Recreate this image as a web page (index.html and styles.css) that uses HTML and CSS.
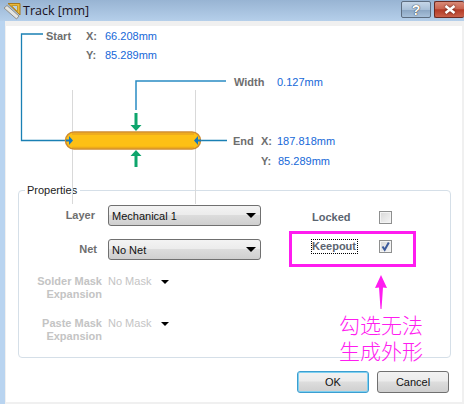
FILE: index.html
```html
<!DOCTYPE html>
<html lang="en">
<head>
<meta charset="utf-8">
<title>Track [mm]</title>
<link rel="stylesheet" href="styles.css">
</head>
<body>
<div class="window">
  <header class="titlebar">
    <svg class="app-icon" width="18" height="18" viewBox="0 0 18 18">
      <path d="M5 1.500H17V13Z" fill="#e9b93a" stroke="#a8791c"/>
      <path d="M8.500 3.500H14.500V9.500Z" fill="#b9d0e6" stroke="#c49a30"/>
      <path d="M1 6L4 3.500L16 14L13.500 17Z" fill="#e4e4e0" stroke="#8f8f8a"/>
    </svg>
    <span class="title">Track [mm]</span>
    <div class="caption-buttons">
      <span class="caption-btn help">?</span>
      <span class="caption-btn close">
        <svg width="12" height="9" viewBox="0 0 12 9"><path d="M1.500 1L10.500 8M10.500 1L1.500 8" stroke="#fff" stroke-width="2.600"/></svg>
      </span>
    </div>
  </header>
  <main class="content">
    <section class="diagram">
      <svg class="drawing" width="456" height="190" viewBox="6 26 456 190">
        <path d="M72.500 90V204M195.500 90V204" stroke="#d9d9d9" fill="none"/>
        <path d="M43 34H21.500V140.500H66M201 140.500H227" stroke="#1a80b4" stroke-width="1.300" fill="none"/>
        <path d="M226 81H136V110" stroke="#2a8cc4" stroke-width="1.500" fill="none"/>
        <rect x="65.500" y="132" width="135" height="17" rx="8.500" fill="#fdc015" stroke="#d08c30" stroke-width="1.500"/>
        <path d="M72 134H194" stroke="#e8a520" stroke-width="1.500"/>
        <path d="M72 147.300H194" stroke="#eaa51c" stroke-width="1"/>
        <path d="M66 139.500H69V136L73 140.500L69 145V141.500H66Z" fill="#1478c0"/>
        <path d="M201 139.500H198V136L194 140.500L198 145V141.500H201Z" fill="#1478c0"/>
        <path d="M134.500 113H137.500V125H141.500L136 131L130.500 125H134.500Z" fill="#0ea56c"/>
        <path d="M134.500 167H137.500V156H141.500L136 150L130.500 156H134.500Z" fill="#0ea56c"/>
      </svg>
      <span class="tag start">Start</span>
      <span class="tag sx">X:</span><span class="val vsx">66.208mm</span>
      <span class="tag sy">Y:</span><span class="val vsy">85.289mm</span>
      <span class="tag width">Width</span><span class="val vw">0.127mm</span>
      <span class="tag end">End</span>
      <span class="tag ex">X:</span><span class="val vex">187.818mm</span>
      <span class="tag ey">Y:</span><span class="val vey">85.289mm</span>
    </section>
    <section class="props">
      <span class="legend">Properties</span>
      <div class="fields">
        <div class="field">
          <span class="label layer-label">Layer</span>
          <div class="combo"><span>Mechanical 1</span><i class="caret"></i></div>
        </div>
        <div class="field">
          <span class="label net-label">Net</span>
          <div class="combo"><span>No Net</span><i class="caret"></i></div>
        </div>
        <div class="field mask">
          <span class="label off">Solder Mask<br>Expansion</span>
          <div class="flat"><span class="off">No Mask</span><i class="caret"></i></div>
        </div>
        <div class="field mask">
          <span class="label off">Paste Mask<br>Expansion</span>
          <div class="flat"><span class="off">No Mask</span><i class="caret"></i></div>
        </div>
      </div>
      <div class="flags">
        <div class="flag"><span class="flag-name">Locked</span><span class="check"></span></div>
        <div class="flag"><span class="flag-name focus">Keepout</span>
          <span class="check"><svg width="11" height="11" viewBox="0 0 11 11"><path d="M2.500 5.500L4.700 8.800L8.800 1.500" stroke="#3b5a9c" stroke-width="2" fill="none"/></svg></span>
        </div>
      </div>
    </section>
    <footer class="actions">
      <button class="btn default">OK</button>
      <button class="btn">Cancel</button>
    </footer>
    <div class="note-box"></div>
    <svg class="note-arrow" width="14" height="34" viewBox="0 0 14 34"><path d="M7 0L13 13L9 12.500L7.500 34H6.500L5 12.500L1 13Z" fill="#ff1cf0"/></svg>
    <p class="note">勾选无法<br>生成外形</p>
  </main>
</div>
</body>
</html>
```
FILE: styles.css
```css
* { box-sizing: border-box; }
html, body { margin: 0; padding: 0; }
body {
  width: 464px;
  height: 404px;
  overflow: hidden;
  font-family: "Liberation Sans", Arial, sans-serif;
  font-size: 11px;
  color: #111;
}
.window {
  width: 464px;
  height: 404px;
  display: flex;
  flex-direction: column;
  background: #f0f0f0;
  border-left: 5px solid #b9d4f0;
}
.titlebar {
  height: 21px;
  margin-left: -5px;
  flex: none;
  display: flex;
  align-items: center;
  padding-left: 3px;
  background: linear-gradient(#98b4d3, #b5cfea);
}
.app-icon { flex: none; margin-right: 2px; }
.title {
  font-family: "Open Sans", sans-serif;
  font-size: 12.500px;
  color: #1a1020;
}
.caption-buttons {
  margin-left: auto;
  display: flex;
  gap: 3px;
  align-self: flex-start;
  padding-top: 1px;
}
.caption-btn {
  height: 17px;
  display: flex;
  align-items: center;
  justify-content: center;
  border: 1px solid #5d6d80;
  border-radius: 2px;
}
.help {
  width: 30px;
  background: linear-gradient(#c5d6e8 0, #a9c0d8 50%, #8aa5c2 52%, #a7c0da 100%);
  color: #fff;
  font: bold 14px "Liberation Sans", sans-serif;
  text-shadow: 0 0 1px #333, 0 0 1px #333;
}
.close {
  width: 30px;
  border-color: #6b2a22;
  border-right: 0;
  background: linear-gradient(#d98a78 0, #c96551 45%, #b33a26 52%, #c9604a 100%);
}
.close svg { filter: drop-shadow(0 0 1px #5a1a10); }
.content {
  position: relative;
  flex: 1;
  margin: 5px 2px 2px 1px;
  background: #fff;
  display: flex;
  flex-direction: column;
}
.diagram {
  position: relative;
  height: 164px;
  flex: none;
}
.drawing {
  position: absolute;
  left: 0;
  top: 0;
  overflow: visible;
  z-index: 2;
  pointer-events: none;
}
.tag, .val {
  position: absolute;
  line-height: 14px;
  white-space: nowrap;
}
.tag { color: #6e6e6e; font-weight: bold; }
.val { color: #1668d8; }
.start { left: 40px; top: 3px; }
.sx { left: 80px; top: 3px; }
.sy { left: 80px; top: 22px; }
.vsx { left: 99px; top: 3px; }
.vsy { left: 99px; top: 22px; }
.width { left: 228px; top: 49px; }
.vw { left: 271px; top: 49px; }
.end { left: 227px; top: 108px; }
.ex { left: 255px; top: 108px; }
.vex { left: 271px; top: 108px; }
.ey { left: 255px; top: 128px; }
.vey { left: 272px; top: 128px; }
.props {
  position: relative;
  flex: none;
  height: 168px;
  margin: 0 11px 0 12px;
  border: 1px solid #d5dfe8;
  border-radius: 4px;
  padding-top: 14px;
  display: flex;
}
.legend {
  position: absolute;
  left: 6px;
  top: -7px;
  padding: 0 3px 0 2px;
  background: #fff;
  line-height: 13px;
  color: #222;
}
.fields {
  width: 242px;
  flex: none;
  display: flex;
  flex-direction: column;
  gap: 13px;
}
.field {
  display: flex;
  gap: 6px;
  min-height: 21px;
  align-items: center;
}
.field.mask { align-items: flex-start; margin-top: 2px; }
.field.mask + .field.mask { margin-top: 3px; }
.label {
  width: 83px;
  flex: none;
  text-align: right;
  line-height: 13px;
  font-weight: bold;
  color: #6e6e6e;
}
.layer-label { padding-right: 7px; }
.net-label { padding-right: 5px; }
.label.off, .off { color: #c4c4c4; }
.combo {
  width: 153px;
  height: 21px;
  display: flex;
  align-items: center;
  justify-content: space-between;
  padding: 0 4px 0 3px;
  border: 1px solid #707070;
  border-radius: 3px;
  background: linear-gradient(#f3f3f3 0, #ececec 45%, #dcdcdc 50%, #cfcfcf 100%);
}
.caret {
  width: 0;
  height: 0;
  border-left: 5px solid transparent;
  border-right: 5px solid transparent;
  border-top: 5px solid #000;
}
.flat {
  display: flex;
  align-items: center;
  gap: 10px;
  line-height: 13px;
}
.flat .caret { border-left-width: 4px; border-right-width: 4px; border-top-width: 4px; }
.flags {
  padding-left: 51px;
  display: flex;
  flex-direction: column;
}
.flag {
  display: flex;
  align-items: center;
  height: 15px;
  margin-top: 5px;
  margin-bottom: 9px;
}
.flag + .flag { margin-top: 5px; }
.flag-name {
  width: 67px;
  color: #5b6470;
  font-weight: bold;
  line-height: 13px;
}
.focus { outline: 1px dotted #000; outline-offset: 0; width: 45px; margin-right: 22px; }
.check {
  width: 13px;
  height: 13px;
  border: 1px solid #8e8f8f;
  background: linear-gradient(135deg, #d8d8d8, #f6f6f6);
  box-shadow: inset 0 0 0 1px #f4f4f4;
  display: flex;
  align-items: center;
  justify-content: center;
}
.actions {
  display: flex;
  justify-content: flex-end;
  gap: 8px;
  margin-top: 13px;
  padding-right: 13px;
}
.btn {
  width: 72px;
  height: 22px;
  padding: 0;
  border: 1px solid #707070;
  border-radius: 3px;
  background: linear-gradient(#f2f2f2 0, #ebebeb 45%, #dddddd 50%, #cfcfcf 100%);
  font: 11px "Liberation Sans", Arial, sans-serif;
  color: #111;
}
.btn.default {
  border-color: #3c9ed0;
  box-shadow: inset 0 0 0 1px #7fd0f0;
}
.note-box {
  position: absolute;
  left: 283px;
  top: 205px;
  width: 127px;
  height: 36px;
  border: 3px solid #ff1cf0;
}
.note-arrow {
  position: absolute;
  left: 368px;
  top: 249px;
}
.note {
  position: absolute;
  left: 333px;
  top: 285px;
  margin: 0;
  font-family: "Noto Sans CJK SC", sans-serif;
  font-size: 21px;
  font-weight: 300;
  line-height: 26px;
  color: #ff1cf0;
  white-space: nowrap;
}
```
